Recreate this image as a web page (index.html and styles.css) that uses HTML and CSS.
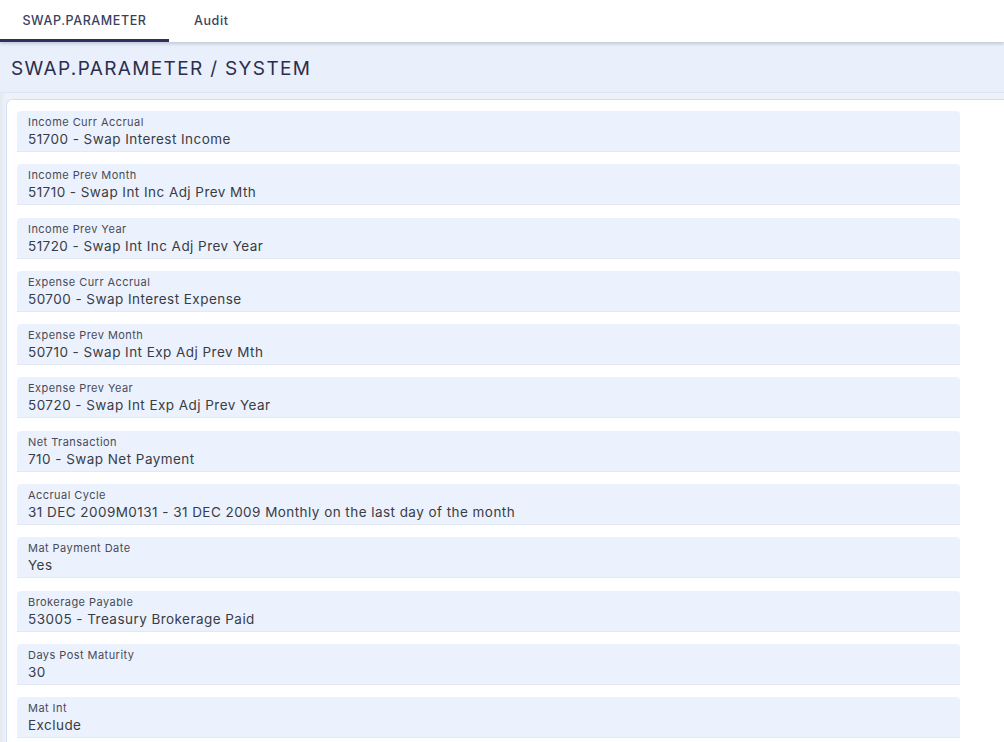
FILE: index.html
```html
<!DOCTYPE html>
<html>
<head>
<meta charset="utf-8">
<link rel="stylesheet" href="styles.css">
</head>
<body>
<div class="tabs">
  <div class="tab active">SWAP.PARAMETER</div>
  <div class="tab">Audit</div>
</div>
<div class="page">
  <div class="header"><h1 class="title">SWAP.PARAMETER / SYSTEM</h1></div>
  <div class="card">
    <div class="field"><div class="label">Income Curr Accrual</div><div class="value">51700 - Swap Interest Income</div></div>
    <div class="field"><div class="label">Income Prev Month</div><div class="value">51710 - Swap Int Inc Adj Prev Mth</div></div>
    <div class="field"><div class="label">Income Prev Year</div><div class="value">51720 - Swap Int Inc Adj Prev Year</div></div>
    <div class="field"><div class="label">Expense Curr Accrual</div><div class="value">50700 - Swap Interest Expense</div></div>
    <div class="field"><div class="label">Expense Prev Month</div><div class="value">50710 - Swap Int Exp Adj Prev Mth</div></div>
    <div class="field"><div class="label">Expense Prev Year</div><div class="value">50720 - Swap Int Exp Adj Prev Year</div></div>
    <div class="field"><div class="label">Net Transaction</div><div class="value">710 - Swap Net Payment</div></div>
    <div class="field"><div class="label">Accrual Cycle</div><div class="value">31 DEC 2009M0131 - 31 DEC 2009 Monthly on the last day of the month</div></div>
    <div class="field"><div class="label">Mat Payment Date</div><div class="value">Yes</div></div>
    <div class="field"><div class="label">Brokerage Payable</div><div class="value">53005 - Treasury Brokerage Paid</div></div>
    <div class="field"><div class="label">Days Post Maturity</div><div class="value">30</div></div>
    <div class="field"><div class="label">Mat Int</div><div class="value">Exclude</div></div>
  </div>
</div>
</body>
</html>
```
FILE: styles.css
```css
html, body {
  margin: 0;
  padding: 0;
  background: #ffffff;
  font-family: Inter, "Noto Sans", sans-serif;
  overflow: hidden;
  height: 742px;
}
.tabs {
  display: flex;
  height: 42px;
  background: #ffffff;
  position: relative;
  z-index: 2;
  box-shadow: 0 2px 3px rgba(120, 130, 150, 0.35);
}
.tab {
  box-sizing: border-box;
  height: 42px;
  padding: 13px 0 0;
  font-size: 12.5px;
  font-weight: 500;
  color: #3b3f5e;
  letter-spacing: 0.6px;
}
.tab.active {
  width: 169px;
  text-align: center;
  border-bottom: 3px solid #2d3160;
}
.tab:not(.active) {
  margin-left: 25px;
}
.page {
  background: linear-gradient(to right, #e4e9f1 0, #eef2f8 6px, #eef2f8 100%);
}
.header {
  background: #e9f0fc;
  height: 51px;
  box-sizing: border-box;
  padding: 15px 11px 0;
  border-bottom: 1px solid #dde6f4;
}
.title {
  margin: 0;
  font-size: 19px;
  font-weight: 400;
  color: #2b2e4c;
  letter-spacing: 1.35px;
}
.card {
  margin: 6px 0 0 6px;
  background: #ffffff;
  border-left: 1px solid #d2def5;
  border-top: 1px solid #d2def5;
  border-top-left-radius: 6px;
  padding: 11px 44px 20px 10px;
  display: flex;
  flex-direction: column;
  gap: 12.3px;
  height: 700px;
}
.field {
  background: #ebf2fe;
  border-radius: 4px 4px 0 0;
  border-bottom: 1px solid #e2e9f5;
  height: 41px;
  box-sizing: border-box;
  padding: 4px 11px 0;
}
.label {
  font-size: 11px;
  color: #484b55;
  line-height: 14px;
  letter-spacing: 0.45px;
}
.value {
  font-size: 13.5px;
  color: #3a3c44;
  line-height: 19px;
  margin-top: 1px;
  letter-spacing: 0.45px;
}
```
